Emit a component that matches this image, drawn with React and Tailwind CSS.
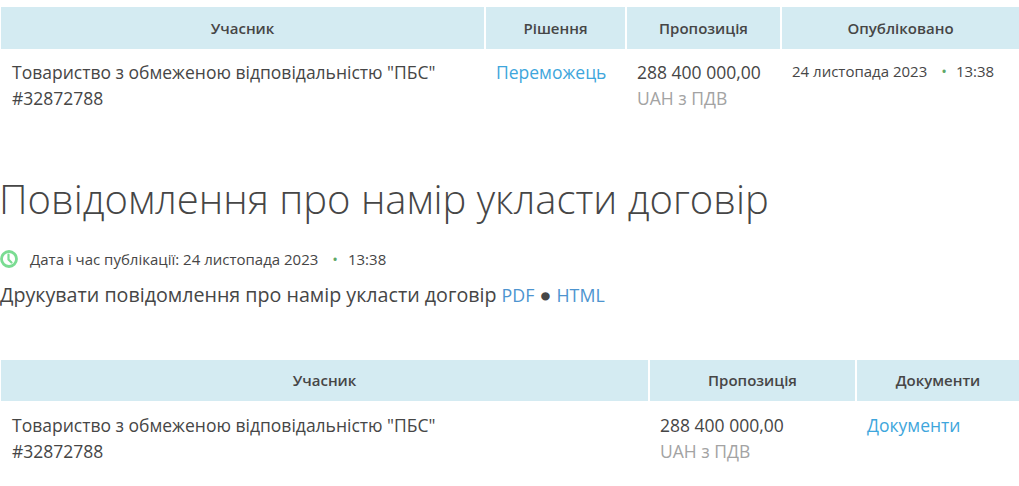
const font = { fontFamily: '"Open Sans", sans-serif' };

function Th({ width, children }) {
  return (
    <div
      className="flex h-full shrink-0 items-center justify-center bg-[#d4ebf2] text-[15px] font-semibold text-[#464646]"
      style={{ width }}
    >
      {children}
    </div>
  );
}

function Price() {
  return (
    <>
      <div className="text-[#464646]">288 400 000,00</div>
      <div className="text-[#a3a3a3]">UAH з ПДВ</div>
    </>
  );
}

function Participant() {
  return (
    <div className="text-[#464646]">
      <div>Товариство з обмеженою відповідальністю "ПБС"</div>
      <div>#32872788</div>
    </div>
  );
}

function ClockIcon() {
  return (
    <svg width="18" height="18" viewBox="0 0 18 18" fill="none" stroke="#7adc92" strokeWidth="2.8" strokeLinecap="round">
      <circle cx="9" cy="9" r="7.5" />
      <path d="M8.5 4.5V9.5L11.5 12.5" strokeWidth="2.2" />
    </svg>
  );
}

export default function App() {
  return (
    <div className="h-[486px] w-[1019px] overflow-hidden bg-white pl-px pt-[7px]" style={font}>
      <div className="flex h-[42px] gap-[2px]">
        <Th width={483}>Учасник</Th>
        <Th width={139}>Рішення</Th>
        <Th width={153}>Пропозиція</Th>
        <Th width={237}>Опубліковано</Th>
      </div>
      <div className="flex gap-[2px] pt-[10px] text-[17.5px] leading-[26px]">
        <div className="w-[483px] shrink-0 pl-[11px]">
          <Participant />
        </div>
        <div className="w-[139px] shrink-0 pl-[10px] text-[#3ea6dc]">Переможець</div>
        <div className="w-[153px] shrink-0 pl-[10px]">
          <Price />
        </div>
        <div className="flex w-[237px] shrink-0 pl-[10px] text-[15px] leading-[24px] text-[#464646]">
          <span>24 листопада 2023</span>
          <span className="ml-[14px] text-[#5fa868]">•</span>
          <span className="ml-[9px]">13:38</span>
        </div>
      </div>

      <h1 className="-ml-[2px] mt-[61px] text-[40px] font-light leading-[54px] text-[#464646]">
        Повідомлення про намір укласти договір
      </h1>

      <div className="-ml-px mt-[21px] flex h-[24px] items-center text-[15px] text-[#464646]">
        <ClockIcon />
        <span className="ml-[12px]">Дата і час публікації: 24 листопада 2023</span>
        <span className="ml-[14px] text-[#5fa868]">•</span>
        <span className="ml-[10px]">13:38</span>
      </div>

      <div className="-ml-px mt-[11px] text-[19.67px] leading-[26px] text-[#464646]">
        Друкувати повідомлення про намір укласти договір <a className="text-[17.8px] text-[#4d94cf]">PDF</a> ● <a className="text-[17.8px] text-[#4d94cf]">HTML</a>
      </div>

      <div className="mt-[52px] flex h-[41px] gap-[2px]">
        <Th width={647}>Учасник</Th>
        <Th width={205}>Пропозиція</Th>
        <Th width={162}>Документи</Th>
      </div>
      <div className="flex gap-[2px] pt-[11px] text-[17.5px] leading-[26px]">
        <div className="w-[647px] shrink-0 pl-[11px]">
          <Participant />
        </div>
        <div className="w-[205px] shrink-0 pl-[10px]">
          <Price />
        </div>
        <div className="w-[162px] shrink-0 pl-[10px] text-[#3ea6dc]">Документи</div>
      </div>
    </div>
  );
}
